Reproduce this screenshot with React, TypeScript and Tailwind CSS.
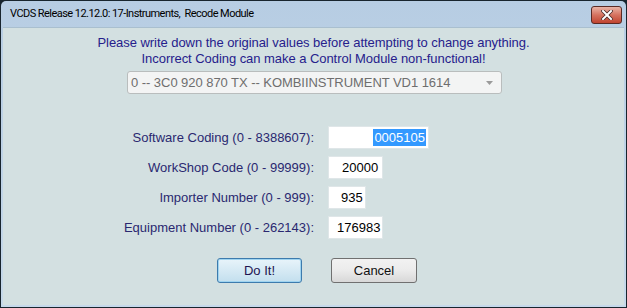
import React from "react";

const Row = ({ label, value, w, pl = "", align = "left", selected = false }: { label: string; value: string; w: string; pl?: string; align?: string; selected?: boolean }) => (
  <div className="flex items-center h-[23px]">
    <div className="w-[250px] text-right pr-[14px] text-[#2a2870] text-[13px] leading-[16px]">{label}</div>
    <div className={`${w} h-[23px] bg-white border border-[#dfe6e8] flex items-center ${align === "right" ? "justify-end pr-[2px]" : pl} text-[13px] text-black`}>
      {selected ? <span className="bg-[#3399ff] text-white px-[1px] leading-[17px]">{value}</span> : <span>{value}</span>}
    </div>
  </div>
);

export default function App() {
  return (
    <div className="w-[627px] h-[308px] bg-[#18252e] p-[1px]" style={{ fontFamily: '"Liberation Sans", Arial, sans-serif' }}>
      <div className="w-full h-full flex flex-col bg-gradient-to-b from-[#b7cde3] to-[#c6d9ea] rounded-t-[5px] px-[2px] pb-[2px]">
        <div className="h-[26px] flex items-center justify-between pl-[7px] pr-[2px] shrink-0">
          <span className="text-[11px] text-black" style={{ fontFamily: 'Roboto, sans-serif', letterSpacing: "-0.55px" }}>
            VCDS Release 12.12.0: 17-Instruments,&nbsp; Recode Module
          </span>
          <div className="w-[31px] h-[18px] mt-[1px] rounded-[3px] border border-[#5a2a24] bg-gradient-to-b from-[#e8b3a6] via-[#d5725f] to-[#c0432f] flex items-center justify-center">
            <svg width="12" height="10" viewBox="0 0 12 10">
              <path d="M2 1 L10 9 M10 1 L2 9" stroke="#4a2a28" strokeWidth="3.6" strokeLinecap="square" />
              <path d="M2 1 L10 9 M10 1 L2 9" stroke="#ffffff" strokeWidth="2" strokeLinecap="square" />
            </svg>
          </div>
        </div>
        <div className="flex-1 bg-[#d3e0e1] border-t border-[#a9bfcf] flex flex-col">
          <div className="flex flex-col items-center pt-[7px] text-[13px] leading-[16px] text-[#26208c]" style={{ letterSpacing: "-0.05px" }}>
            <div>Please write down the original values before attempting to change anything.</div>
            <div>Incorrect Coding can make a Control Module non-functional!</div>
            <div className="mt-[4px] ml-[2px] w-[375px] h-[23px] rounded-[3px] border border-[#b9bdbd] bg-[#f3f4f4] flex items-center justify-between pl-[3px] pr-[8px] text-[#6e6e6e]">
              <span>0 -- 3C0 920 870 TX -- KOMBIINSTRUMENT VD1 1614</span>
              <svg width="7" height="4" viewBox="0 0 7 4">
                <path d="M0 0 H7 L3.5 4 Z" fill="#9a9a9a" />
              </svg>
            </div>
          </div>
          <div className="mt-[32px] flex flex-col gap-[7px] pl-[75px]">
            <Row label="Software Coding (0 - 8388607):" value="0005105" w="w-[101px]" align="right" selected />
            <Row label="WorkShop Code (0 - 99999):" value="20000" w="w-[55px]" pl="pl-[13px]" />
            <Row label="Importer Number (0 - 999):" value="935" w="w-[38px]" pl="pl-[12px]" />
            <Row label="Equipment Number (0 - 262143):" value="176983" w="w-[55px]" pl="pl-[8px]" />
          </div>
          <div className="mt-[19px] flex gap-[29px] pl-[214px] text-[13px]">
            <div className="w-[85px] h-[25px] rounded-[3px] border border-[#3d7bad] bg-gradient-to-b from-[#e8f4fa] to-[#c3dfee] flex items-center justify-center text-[#1e1450] shadow-[inset_0_0_0_1px_#9fd4f0]">
              Do It!
            </div>
            <div className="w-[86px] h-[25px] rounded-[3px] border border-[#707070] bg-gradient-to-b from-[#f2f2f2] via-[#ebebeb] to-[#d8d8d8] flex items-center justify-center text-[#111]">
              Cancel
            </div>
          </div>
        </div>
      </div>
    </div>
  );
}
